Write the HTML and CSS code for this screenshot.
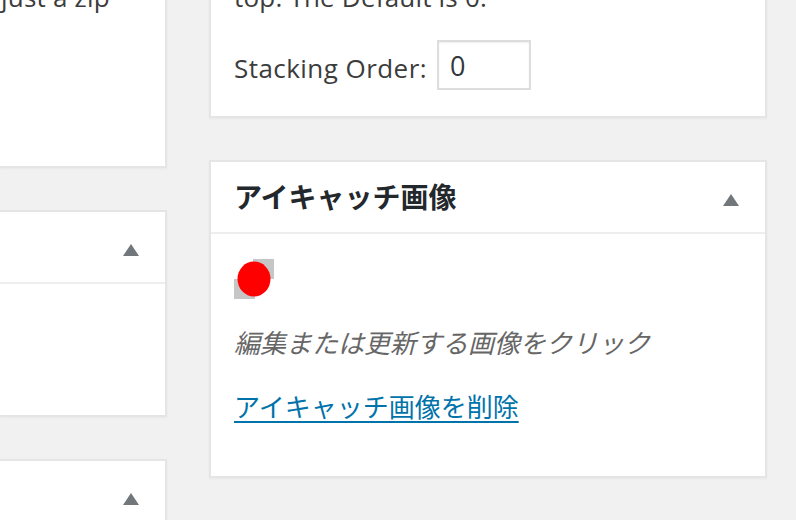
FILE: index.html
```html
<!DOCTYPE html>
<html lang="ja">
<head>
<meta charset="utf-8">
<title>アイキャッチ画像</title>
<link rel="stylesheet" href="styles.css">
</head>
<body>
<div class="wrap">
  <div class="col col-left">
    <div class="postbox first">
      <p class="inside-text cut-left">just a zip</p>
    </div>
    <div class="postbox box-mid">
      <div class="hndle"><span class="title"></span><span class="toggle"></span></div>
      <div class="inside tall"></div>
    </div>
    <div class="postbox box-last">
      <div class="hndle"><span class="title"></span><span class="toggle"></span></div>
    </div>
  </div>
  <div class="col col-right">
    <div class="postbox first pad">
      <p class="inside-text">top. The Default is 0.</p>
      <div class="row">
        <label class="label" for="order">Stacking Order:</label>
        <input class="field" id="order" type="text" value="0">
      </div>
    </div>
    <div class="postbox">
      <div class="hndle"><span class="title">アイキャッチ画像</span><span class="toggle"></span></div>
      <div class="inside thumb-body">
        <a class="thumb" href="#">
          <svg width="40" height="40" viewBox="0 0 40 40">
            <rect x="0" y="0" width="40" height="40" fill="#ffffff"/>
            <rect x="19" y="0" width="21" height="20" fill="#c6c6c6"/>
            <rect x="0" y="20" width="21" height="20" fill="#c6c6c6"/>
            <ellipse cx="20" cy="20" rx="16.5" ry="17.5" fill="#ff0000"/>
          </svg>
        </a>
        <p class="hint">編集または更新する画像をクリック</p>
        <p class="remove"><a href="#">アイキャッチ画像を削除</a></p>
      </div>
    </div>
  </div>
</div>
</body>
</html>
```

FILE: styles.css
```css
html, body {
  margin: 0;
  padding: 0;
  background: #f1f1f1;
  overflow: hidden;
}
body {
  font-family: "Open Sans", "Noto Sans CJK JP", sans-serif;
  font-size: 26px;
  color: #3c3c3c;
}
.wrap {
  display: flex;
  gap: 42px;
  margin-top: -21px;
}
.col {
  display: flex;
  flex-direction: column;
  gap: 42px;
}
.col-left {
  width: 167px;
}
.col-right {
  width: 558px;
}
.postbox {
  background: #fff;
  border: 2px solid #e5e5e5;
  box-shadow: 0 1px 2px rgba(0,0,0,0.04);
}
.col-left .postbox {
  border-left: none;
}
.postbox.first {
  border-top: none;
}
.col-left .first {
  padding-bottom: 151px;
}
.box-last {
  height: 120px;
}
.inside-text {
  margin: 0;
  line-height: 36px;
  color: #3c3c3c;
  white-space: nowrap;
  letter-spacing: 0.2px;
}
.cut-left {
  margin-left: 1px;
}
.pad {
  padding: 0 23px 26px;
}
.row {
  display: flex;
  align-items: center;
  margin-top: 25px;
}
.label {
  margin-right: 10px;
  padding-top: 6px;
  letter-spacing: 0.45px;
}
.field {
  box-sizing: border-box;
  width: 94px;
  height: 50px;
  border: 2px solid #ddd;
  box-shadow: inset 0 1px 2px rgba(0,0,0,0.07);
  padding: 0 11px;
  font-family: "Open Sans", sans-serif;
  font-size: 27px;
  color: #32373c;
  background: #fff;
  margin: 0;
  outline: none;
}
.hndle {
  display: flex;
  align-items: center;
  justify-content: space-between;
  height: 70px;
  border-bottom: 2px solid #eee;
  padding: 0 26px 0 23px;
}
.title {
  font-family: "Noto Sans CJK JP", sans-serif;
  font-weight: 700;
  font-size: 28px;
  color: #23282d;
  line-height: 40px;
  margin-top: -2px;
}
.toggle {
  width: 0;
  height: 0;
  border-left: 8px solid transparent;
  border-right: 8px solid transparent;
  border-bottom: 12px solid #72777c;
  margin-top: 6px;
}
.tall {
  height: 131px;
}
.thumb-body {
  padding: 25px 23px 52px;
}
.thumb {
  display: block;
  width: 40px;
  height: 40px;
}
.thumb svg {
  display: block;
}
.hint {
  margin: 25px 0 0;
  font-family: "Noto Sans CJK JP", sans-serif;
  font-style: italic;
  font-size: 26px;
  line-height: 36px;
  color: #666;
}
.remove {
  margin: 28px 0 0;
  font-family: "Noto Sans CJK JP", sans-serif;
  font-size: 26px;
  line-height: 36px;
}
.remove a {
  color: #0073aa;
  text-decoration: underline;
  text-underline-offset: 4px;
  text-decoration-thickness: 2px;
}
```
